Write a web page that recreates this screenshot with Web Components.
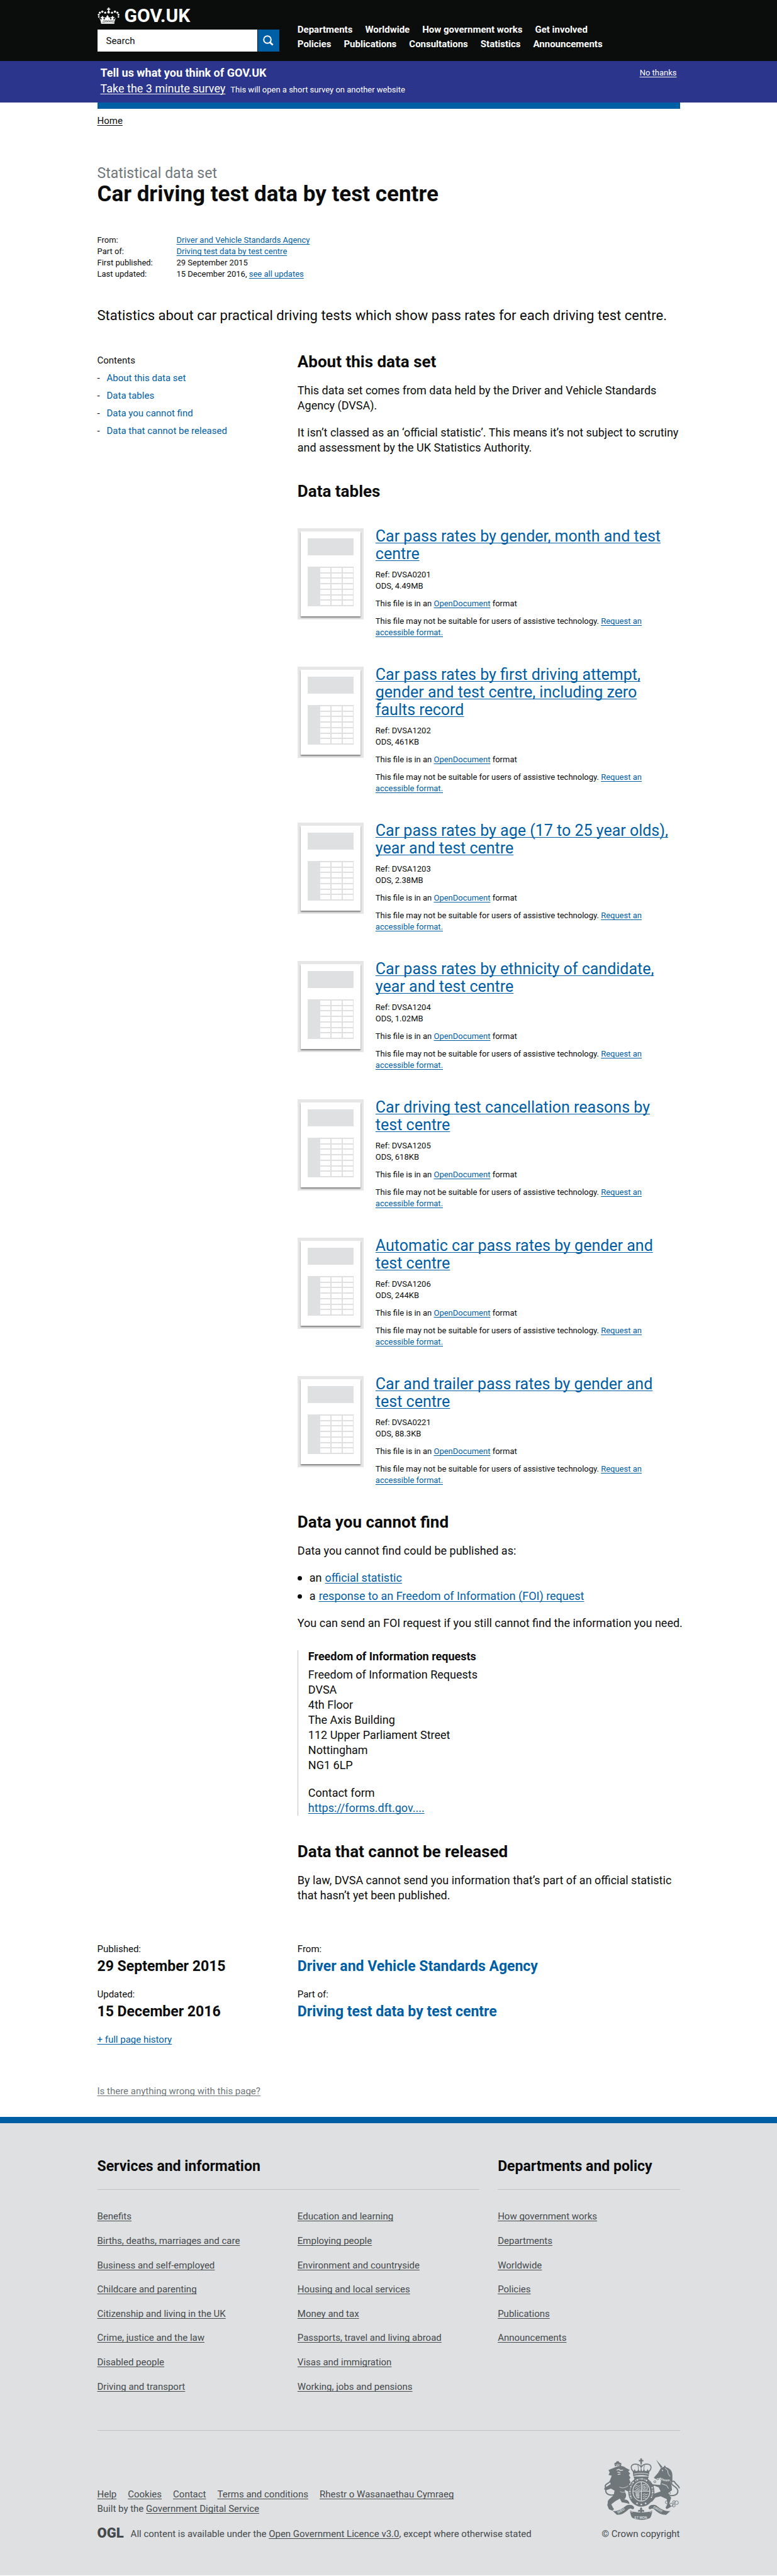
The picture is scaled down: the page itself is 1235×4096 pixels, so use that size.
<!DOCTYPE html>
<html lang="en">
<head>
<meta charset="utf-8">
<title>Car driving test data by test centre - GOV.UK</title>
<style>
  body { margin: 0; background: #fff; color: #0b0c0c; font: 18px/24px Roboto, "Liberation Sans", sans-serif; }
</style>
</head>
<body>
<gov-header></gov-header>
<survey-banner></survey-banner>
<data-page></data-page>
<gov-footer></gov-footer>

<script>
const BASE = `
  * { box-sizing: border-box; }
  :host { display: block; }
  h1, h2, h3, p, ul, dl, dd, dt { margin: 0; padding: 0; }
  ul { list-style: none; }
  a { color: #005ea5; text-decoration: underline; text-decoration-thickness: 1px; text-underline-offset: 2px; text-decoration-skip-ink: none; }
  .wrap { max-width: 926px; margin: 0 auto; }
  .thirds { display: grid; grid-template-columns: repeat(3, minmax(0, 1fr)); column-gap: 29px; }
`;

function define(name, css, html) {
  customElements.define(name, class extends HTMLElement {
    connectedCallback() {
      if (this.shadowRoot) return;
      const root = this.attachShadow({ mode: "open" });
      const t = document.createElement("template");
      t.innerHTML = `<style>${BASE}${css}</style>${typeof html === "function" ? html(this) : html}`;
      root.append(t.content.cloneNode(true));
    }
  });
}

/* ---------- header ---------- */
define("gov-crown", `:host { width: 35px; height: 26px; } svg { display: block; width: 100%; height: 100%; }`, `
<svg viewBox="30 21 106 79" fill="#fff" aria-hidden="true">
  <path d="M80 21h7l-1.500 5h6v6h-6l1.500 9h-7l1.500-9h-6v-6h6z"/>
  <circle cx="83.500" cy="44" r="6"/>
  <circle cx="67" cy="46" r="5"/><circle cx="100" cy="46" r="5"/>
  <circle cx="53" cy="41" r="5.500"/><circle cx="114" cy="41" r="5.500"/>
  <circle cx="41" cy="46" r="5"/><circle cx="126" cy="46" r="5"/>
  <circle cx="35.500" cy="56" r="4.500"/><circle cx="131" cy="56" r="4.500"/>
  <circle cx="36" cy="66" r="4"/><circle cx="131" cy="66" r="4"/>
  <path d="M38 71c3 1 5 4 7 8l5-1-1-7-4 1v-6l5 1 3-7 5 7 4-1v6l-4-1 2 8 8-3-5-5 5-4 4 4v-5l6-9 6 9v5l4-4 5 4-5 5 8 3 2-8-4 1v-6l4 1 5-7 3 7 5-1v6l-4-1-1 7 5 1c2-4 4-7 7-8-4 9-6 15-7 28H47c-1-13-4-20-9-28z"/>
  <path d="M53 92c20-3 41-3 61 0" fill="none" stroke="#0b0c0c" stroke-width="2"/>
  <path d="M56 87l5-4 5 3 6-3 5 3 6-4 6 4 6-3 5 3 5-3 6 4" fill="none" stroke="#0b0c0c" stroke-width="2"/>
</svg>`);

define("site-search", `
  :host { margin-top: 9px; max-width: 290px; }
  form { display: flex; gap: 1px; height: 35px; }
  input { flex: 1; min-width: 0; border: 0; border-radius: 0; padding: 0 14px; background: #fff; color: #0b0c0c; font: 15px/18px Roboto, "Liberation Sans", sans-serif; outline: 0; }
  input::placeholder { color: #0b0c0c; opacity: 1; }
  button { width: 34px; border: 0; padding: 0; background: #005ea5; display: flex; align-items: center; justify-content: center; }
  svg { width: 17px; height: 17px; display: block; }
`, `
<form role="search" onsubmit="return false">
  <input type="search" aria-label="Search GOV.UK" placeholder="Search">
  <button type="submit" aria-label="Search">
    <svg viewBox="0 0 17 17" fill="none" stroke="#fff"><circle cx="7" cy="7" r="5.800" stroke-width="2"/><path d="M11 11.200l4.600 4.400" stroke-width="2.800"/></svg>
  </button>
</form>`);

define("gov-nav", `
  nav { display: flex; flex-wrap: wrap; column-gap: 20px; max-width: 520px; }
  a { color: #fff; font-weight: 700; font-size: 15px; line-height: 23px; text-decoration: none; }
  i { flex-basis: 100%; }
`, `
<nav aria-label="Main">
  <a href="#">Departments</a><a href="#">Worldwide</a><a href="#">How government works</a><a href="#">Get involved</a><i></i>
  <a href="#">Policies</a><a href="#">Publications</a><a href="#">Consultations</a><a href="#">Statistics</a><a href="#">Announcements</a>
</nav>`);

define("gov-header", `
  :host { background: #0b0c0c; padding: 11px 16px 15px; }
  .logo { display: flex; align-items: center; gap: 8px; height: 27px; color: #fff; text-decoration: none; font-weight: 700; font-size: 30px; line-height: 27px; }
  .nav { grid-column: span 2; align-self: end; }
`, `
<header class="wrap thirds">
  <div><a class="logo" href="#"><gov-crown></gov-crown><span>GOV.UK</span></a><site-search></site-search></div>
  <gov-nav class="nav"></gov-nav>
</header>`);

/* ---------- survey banner ---------- */
define("survey-banner", `
  :host { background: #2b358b; color: #fff; padding: 6px 16px 8px; }
  .wrap { display: flex; justify-content: space-between; padding: 0 5px; }
  h2 { font-size: 18px; line-height: 25px; }
  p { font-size: 13px; line-height: 25px; }
  a { color: #fff; }
  p a { font-size: 18px; margin-right: 8px; }
  .no { font-size: 13px; line-height: 18px; padding-top: 4px; }
`, `
<div class="wrap">
  <div><h2>Tell us what you think of GOV.UK</h2><p><a href="#">Take the 3 minute survey</a>This will open a short survey on another website</p></div>
  <a class="no" href="#">No thanks</a>
</div>`);

/* ---------- attachment ---------- */
define("sheet-thumb", `
  :host { width: 105px; height: 145px; border: 5px solid #e6e6e6; background: #e6e6e6; flex: none; }
  .page { height: 135px; background: #fff; box-shadow: 0 2px 2px rgba(0, 0, 0, .45); padding: 11px; }
  .head { height: 27px; background: #dee0e2; margin-bottom: 18px; }
  .grid { height: 63px; background: #dee0e2; padding: 2px 1px 2px 20px; display: grid; grid-template: repeat(7, 1fr) / repeat(3, 1fr); gap: 2px; }
  .grid b { background: #fff; }
`, `<div class="page"><div class="head"></div><div class="grid">${"<b></b>".repeat(21)}</div></div>`);

define("file-attachment", `
  :host { display: flex; gap: 19px; }
  sheet-thumb { margin-top: 1px; }
  .body { font-size: 13px; line-height: 18px; display: flex; flex-direction: column; gap: 10px; min-width: 0; }
  h3 { font-weight: 400; font-size: 25px; line-height: 28px; max-width: 475px; }
  p { max-width: 450px; }
`, el => `
<sheet-thumb></sheet-thumb>
<div class="body">
  <h3><a href="#"><slot></slot></a></h3>
  <p>Ref: ${el.getAttribute("ref")}<br>ODS, ${el.getAttribute("size")}</p>
  <p>This file is in an <a href="#">OpenDocument</a> format</p>
  <p>This file may not be suitable for users of assistive technology. <a href="#">Request an accessible format.</a></p>
</div>`);

/* ---------- main column pieces ---------- */
define("page-title", `
  .context { color: #6f777b; font-size: 23px; line-height: 28px; }
  h1 { font-size: 35px; line-height: 37px; }
`, `<p class="context"><slot name="context"></slot></p><h1><slot></slot></h1>`);

define("meta-list", `
  dl { display: grid; grid-template-columns: 126px 1fr; font-size: 13px; line-height: 18px; }
`, `
<dl>
  <dt>From:</dt><dd><a href="#">Driver and Vehicle Standards Agency</a></dd>
  <dt>Part of:</dt><dd><a href="#">Driving test data by test centre</a></dd>
  <dt>First published:</dt><dd>29 September 2015</dd>
  <dt>Last updated:</dt><dd>15 December 2016, <a href="#">see all updates</a></dd>
</dl>`);

define("contents-nav", `
  :host { font-size: 15px; line-height: 18px; padding-top: 4px; }
  ul { display: flex; flex-direction: column; gap: 10px; padding-top: 10px; }
  li { display: flex; }
  li::before { content: "-"; width: 15px; }
  a { text-decoration: none; }
`, `
<nav aria-label="Contents"><p>Contents</p>
<ul>
  <li><a href="#">About this data set</a></li><li><a href="#">Data tables</a></li>
  <li><a href="#">Data you cannot find</a></li><li><a href="#">Data that cannot be released</a></li>
</ul></nav>`);

define("doc-section", `
  :host { display: flex; flex-direction: column; gap: 19px; }
  h2 { font-size: 26px; line-height: 30px; }
`, el => `<h2>${el.getAttribute("heading")}</h2><slot></slot>`);

define("contact-card", `
  :host { border-left: 1px solid #bfc1c3; padding-left: 16px; margin-top: 12px; }
  h3 { font-size: 18px; line-height: 20px; padding-bottom: 7px; }
  p + p { padding-top: 20px; }
`, `
<h3>Freedom of Information requests</h3>
<p>Freedom of Information Requests<br>DVSA<br>4th Floor<br>The Axis Building<br>112 Upper Parliament Street<br>Nottingham<br>NG1 6LP</p>
<p>Contact form<br><a href="#">https://forms.dft.gov....</a></p>`);

define("doc-facts", `
  .thirds { row-gap: 22px; font-size: 15px; line-height: 18px; }
  .wide { grid-column: span 2; }
  dd { font-weight: 700; font-size: 23px; line-height: 26px; padding-top: 6px; }
  dd a { text-decoration: none; }
  .history { display: block; padding-top: 22px; font-size: 15px; line-height: 18px; }
`, `
<dl class="thirds">
  <div><dt>Published:</dt><dd>29 September 2015</dd></div>
  <div class="wide"><dt>From:</dt><dd><a href="#">Driver and Vehicle Standards Agency</a></dd></div>
  <div><dt>Updated:</dt><dd>15 December 2016</dd></div>
  <div class="wide"><dt>Part of:</dt><dd><a href="#">Driving test data by test centre</a></dd></div>
</dl>
<a class="history" href="#">+ full page history</a>`);

define("data-page", `
  :host { padding: 0 16px 32px; }
  .wrap { border-top: 10px solid #005ea5; padding-top: 10px; }
  .crumb { display: block; font-size: 15px; line-height: 18px; color: #0b0c0c; }
  page-title { margin-top: 61px; }
  meta-list { margin-top: 46px; }
  .lead { font-size: 22px; line-height: 28px; margin-top: 43px; }
  .thirds { margin-top: 44px; }
  .doc { grid-column: span 2; display: flex; flex-direction: column; gap: 42px; margin-right: -12px; }
  .files { display: flex; flex-direction: column; gap: 44px; padding-top: 24px; }
  .bullets { display: flex; flex-direction: column; gap: 5px; }
  .bullets li { display: flex; align-items: center; }
  .bullets li::before { content: ""; width: 7px; height: 7px; border-radius: 50%; background: #0b0c0c; margin-right: 12px; }
  .bullets a { margin-left: 5px; }
  doc-facts { margin-top: 64px; }
  .wrong { display: block; font-size: 15px; line-height: 18px; color: #6f777b; margin-top: 64px; }
`, `
<main class="wrap">
  <a class="crumb" href="#">Home</a>
  <page-title><span slot="context">Statistical data set</span>Car driving test data by test centre</page-title>
  <meta-list></meta-list>
  <p class="lead">Statistics about car practical driving tests which show pass rates for each driving test centre.</p>
  <div class="thirds">
    <contents-nav></contents-nav>
    <div class="doc">
      <doc-section heading="About this data set">
        <p>This data set comes from data held by the Driver and Vehicle Standards Agency (DVSA).</p>
        <p>It isn’t classed as an ‘official statistic’. This means it’s not subject to scrutiny and assessment by the UK Statistics Authority.</p>
      </doc-section>
      <doc-section heading="Data tables">
        <div class="files">
          <file-attachment ref="DVSA0201" size="4.49MB">Car pass rates by gender, month and test centre</file-attachment>
          <file-attachment ref="DVSA1202" size="461KB">Car pass rates by first driving attempt, gender and test centre, including zero faults record</file-attachment>
          <file-attachment ref="DVSA1203" size="2.38MB">Car pass rates by age (17 to 25 year olds), year and test centre</file-attachment>
          <file-attachment ref="DVSA1204" size="1.02MB">Car pass rates by ethnicity of candidate, year and test centre</file-attachment>
          <file-attachment ref="DVSA1205" size="618KB">Car driving test cancellation reasons by test centre</file-attachment>
          <file-attachment ref="DVSA1206" size="244KB">Automatic car pass rates by gender and test centre</file-attachment>
          <file-attachment ref="DVSA0221" size="88.3KB">Car and trailer pass rates by gender and test centre</file-attachment>
        </div>
      </doc-section>
      <doc-section heading="Data you cannot find">
        <p>Data you cannot find could be published as:</p>
        <ul class="bullets">
          <li>an <a href="#">official statistic</a></li>
          <li>a <a href="#">response to an Freedom of Information (FOI) request</a></li>
        </ul>
        <p>You can send an FOI request if you still cannot find the information you need.</p>
        <contact-card></contact-card>
      </doc-section>
      <doc-section heading="Data that cannot be released">
        <p>By law, DVSA cannot send you information that’s part of an official statistic that hasn’t yet been published.</p>
      </doc-section>
    </div>
  </div>
  <doc-facts></doc-facts>
  <a class="wrong" href="#">Is there anything wrong with this page?</a>
</main>`);

/* ---------- footer ---------- */
define("footer-links", `
  ul { display: grid; grid-template-rows: repeat(8, 1fr); height: 309px; align-items: center; }
  a { color: #454a4c; font-size: 15px; line-height: 18px; display: block; width: fit-content; }
`, el => `<ul>${el.getAttribute("items").split("|").map(s => `<li><a href="#">${s}</a></li>`).join("")}</ul>`);

define("royal-arms", `
  :host { width: 121px; height: 98px; } svg { display: block; width: 100%; height: 100%; }
  text { font: 700 16px "Liberation Sans", sans-serif; fill: #dee0e2; }
`, `
<svg viewBox="45 60 375 306" fill="#6f777b" aria-hidden="true">
  <!-- crown above the shield -->
  <path d="M224 60h8v8h7v7h-7v12h-8V75h-7v-7h7z"/>
  <g fill="none" stroke="#6f777b" stroke-width="5">
    <path d="M188 124c-14-14-12-32 6-35 14-2 27 4 34 14 7-10 20-16 34-14 18 3 20 21 6 35"/>
    <path d="M211 94c4 8 4 16 2 26M245 94c-4 8-4 16-2 26" stroke-width="3"/>
    <path d="M228 88v34" stroke-width="5" stroke-dasharray="4 2"/>
  </g>
  <path d="M186 120l6 2 4-9 5 10 9-1 4-9 5 9 5 1 4-11 4 11 5-1 5-9 4 9 9 1 5-10 4 9 6-2-5 28c-24-7-52-7-76 0z"/>
  <path d="M192 138c24-6 48-6 72 0" fill="none" stroke="#dee0e2" stroke-width="3"/>
  <!-- garter and shield -->
  <path d="M190 150h76l-6 16h-64z"/>
  <ellipse cx="229" cy="226" rx="65" ry="74"/>
  <ellipse cx="229" cy="224" rx="44" ry="50" fill="#dee0e2"/>
  <ellipse cx="229" cy="224" rx="40" ry="46"/>
  <path d="M229 178v92M189 223h80" stroke="#dee0e2" stroke-width="4"/>
  <g stroke="#dee0e2" stroke-width="3" fill="none">
    <path d="M199 199l8-5 6 5 10-4M197 209l8-4 8 4 10-4M201 217l8-3 6 3 8-3"/>
    <path d="M236 240l8-4 8 4 9-3M236 250l8-4 8 4 6-3M236 260l8-4 9 3"/>
    <path d="M236 190h14l8 10v16h-22zM243 196v14l9-4z"/>
    <path d="M197 230h24M199 238h22M201 246h20M205 254h16M206 230v22M213 230v30"/>
  </g>
  <g fill="none" stroke="#dee0e2" stroke-width="7" stroke-dasharray="3 4 7 4 2 4">
    <path d="M180 258c-12-24-10-60 12-82M200 172c18-14 40-14 58 0M266 176c22 22 24 58 12 82"/>
  </g>
  <g fill="#dee0e2"><circle cx="208" cy="283" r="4"/><circle cx="229" cy="289" r="4"/><circle cx="250" cy="283" r="4"/></g>
  <!-- lion -->
  <path d="M98 100l-3-16 8-4 4-6h9l4 6 10 4-2 16c-10-5-20-5-30 0z"/>
  <path d="M101 89l6 6 5-8 4 8 8-6" fill="none" stroke="#dee0e2" stroke-width="2.500"/>
  <path d="M100 104c18-10 40-8 50 2l22 12-8 6 10 12-7 6 8 14-6 8 7 16-8 8c8 14 8 22-4 36l-18-8 4 16c6 10 4 24-6 32 16 0 26 10 26 22l-16-4-22-4-10-18-22 12-20 16 8 16c8 6 4 16-6 14l-14-6-8-20 6-26 26-24 4-22-18-10-22 8-12-4 4-10 30-14-6-18 10-26-16-4 6-12-6-12z"/>
  <path d="M106 118l12-4 6 6 14-2M110 128l14 2M112 140l14-2" stroke="#dee0e2" stroke-width="4" fill="none"/>
  <path d="M120 202c14 8 30 4 44-6M124 224c8 6 16 6 26 2" stroke="#dee0e2" stroke-width="2.500" fill="none"/>
  <path d="M96 240c-22 6-44 0-44-22 0-20 36-28 40-42 2-10-12-12-18-2-6 12-22 10-24 22-2 8 8 8 6 18" fill="none" stroke="#6f777b" stroke-width="6"/>
  <path d="M63 270c-2 14 0 26 8 38l8-4-4-34z"/>
  <!-- unicorn -->
  <path d="M302 66l32 36-8 6z"/>
  <path d="M312 132l14-24 14-6 6-8 5 10c22 6 32 20 32 40v34l-10-4 6 20 2 24-18 14 14 24-10 30 10 14-22 12-6-8 10-18-4-24-30-14-26 6-16 20-24 8 2-10 16-8 14-28 34-12-10-20-22-8-16 6-10-10-8-14 10-4 12 14 20 2 22 2 4-22-8-14-20 6-8-6z"/>
  <circle cx="334" cy="120" r="3" fill="#dee0e2"/>
  <path d="M322 158c14 10 32 14 48 10" fill="none" stroke="#dee0e2" stroke-width="9" stroke-dasharray="5 3"/>
  <path d="M346 108l14 12 2 16 10 14M330 186l24 8 10 16" fill="none" stroke="#dee0e2" stroke-width="3"/>
  <path d="M370 244c22 4 42-4 40-24-2-18-30-24-32-38 0-10 14-12 18-2 4 10 18 12 22 28" fill="none" stroke="#6f777b" stroke-width="6"/>
  <g fill="none" stroke="#6f777b" stroke-width="3">
    <circle cx="372" cy="214" r="6"/><circle cx="366" cy="232" r="7"/><circle cx="355" cy="278" r="7"/><circle cx="364" cy="293" r="7"/>
    <circle cx="378" cy="290" r="8"/><circle cx="391" cy="276" r="6"/><circle cx="404" cy="280" r="9"/><circle cx="390" cy="294" r="7"/><circle cx="310" cy="160" r="6"/><circle cx="296" cy="176" r="5"/>
  </g>
  <!-- motto ribbon -->
  <path d="M86 320c16 6 42-4 68-26 12-6 28-4 36 4 6 8 2 16-6 14-6-4-12-4-18 0-18 18-34 28-58 28z"/>
  <path d="M374 320c-16 6-46-4-70-26-12-6-28-4-36 4-6 8-2 16 6 14 6-4 12-4 18 0 18 18 36 28 60 28z"/>
  <path d="M172 318l14 6c28 6 58 6 84 0l14-6c-2 10-4 28-12 38-26 12-60 12-86 0-10-8-12-28-14-38z"/>
  <path d="M171 320c8 8 14 8 20 0M285 320c-8 8-14 8-20 0" fill="none" stroke="#dee0e2" stroke-width="3"/>
  <path d="M228 302c8 8 6 14 2 18 6-8 14-4 13 2-1 5-7 4-7 0l-5 6 2 12h-10l2-12-5-6c0 4-6 5-7 0-1-6 7-10 13-2-4-4-6-10 2-18z"/>
  <text x="195" y="359">ET MON</text>
  <text x="114" y="334" transform="rotate(-29 114 334)">DIEU</text>
  <text x="287" y="306" transform="rotate(29 287 306)">DROIT</text>
</svg>`);

define("gov-footer", `
  :host { background: #dee0e2; border-top: 10px solid #005ea5; padding: 56px 16px 57px; color: #454a4c; font-size: 15px; line-height: 18px; }
  a { color: #454a4c; }
  h2 { color: #0b0c0c; font-size: 23px; line-height: 26px; padding-bottom: 23px; border-bottom: 1px solid #bfc1c3; margin-bottom: 23px; }
  .wide { grid-column: span 2; }
  .end { display: flex; justify-content: space-between; align-items: end; border-top: 1px solid #bfc1c3; margin-top: 50px; padding-top: 44px; }
  .row { display: flex; gap: 18px; line-height: 23px; }
  .built { line-height: 23px; }
  .ogl { display: flex; align-items: end; gap: 11px; padding-top: 17px; }
  .mark { font-weight: 900; font-size: 22px; line-height: 20px; }
  .arms { display: flex; flex-direction: column; align-items: end; gap: 13px; }
`, `
<footer class="wrap">
  <div class="thirds">
    <h2 class="wide">Services and information</h2><h2>Departments and policy</h2>
    <footer-links items="Benefits|Births, deaths, marriages and care|Business and self-employed|Childcare and parenting|Citizenship and living in the UK|Crime, justice and the law|Disabled people|Driving and transport"></footer-links>
    <footer-links items="Education and learning|Employing people|Environment and countryside|Housing and local services|Money and tax|Passports, travel and living abroad|Visas and immigration|Working, jobs and pensions"></footer-links>
    <footer-links items="How government works|Departments|Worldwide|Policies|Publications|Announcements"></footer-links>
  </div>
  <div class="end">
    <div>
      <div class="row"><a href="#">Help</a><a href="#">Cookies</a><a href="#">Contact</a><a href="#">Terms and conditions</a><a href="#">Rhestr o Wasanaethau Cymraeg</a></div>
      <p class="built">Built by the <a href="#">Government Digital Service</a></p>
      <div class="ogl"><span class="mark">OGL</span><p>All content is available under the <a href="#">Open Government Licence v3.0</a>, except where otherwise stated</p></div>
    </div>
    <div class="arms"><royal-arms></royal-arms><span>© Crown copyright</span></div>
  </div>
</footer>`);
</script>
</body>
</html>
